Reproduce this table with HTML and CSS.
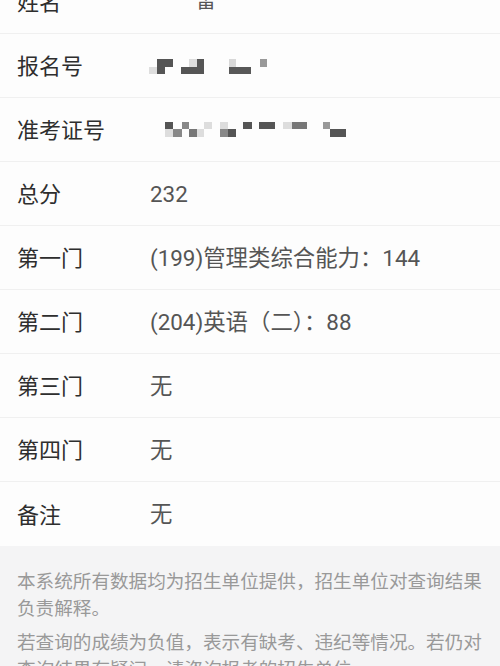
FILE: index.html
```html
<!DOCTYPE html>
<html lang="zh">
<head>
<meta charset="utf-8">
<link rel="stylesheet" href="styles.css">
</head>
<body>
<div class="page">
  <div class="list">
    <div class="row">
      <div class="label">姓名</div>
      <div class="value">
        <svg class="mosaic" width="40" height="20" viewBox="0 0 40 20"><rect x="0" y="0" width="16" height="8" fill="#e2e2e2"/><rect x="16" y="0" width="23" height="8" fill="#5a5a5a"/></svg><span class="name">雷</span>
      </div>
    </div>
    <div class="row">
      <div class="label">报名号</div>
      <div class="value">
        <svg class="mosaic" width="130" height="20" viewBox="149 58 130 20">
          <rect x="149" y="69" width="8" height="7" fill="#dedede"/>
          <rect x="157" y="61" width="16" height="8" fill="#555"/>
          <rect x="157" y="69" width="8" height="7" fill="#555"/>
          <rect x="189" y="61" width="8" height="8" fill="#dcdcdc"/>
          <rect x="197" y="61" width="7" height="15" fill="#555"/>
          <rect x="181" y="69" width="16" height="7" fill="#555"/>
          <rect x="229" y="61" width="7" height="8" fill="#d8d8d8"/>
          <rect x="229" y="69" width="22" height="7" fill="#585858"/>
          <rect x="260" y="61" width="7" height="8" fill="#999"/>
        </svg>
      </div>
    </div>
    <div class="row">
      <div class="label">准考证号</div>
      <div class="value">
        <svg class="mosaic" width="200" height="20" viewBox="149 122 200 20">
          <rect x="165" y="124" width="8" height="7" fill="#555"/>
          <rect x="182" y="124" width="7" height="7" fill="#888"/>
          <rect x="204" y="124" width="8" height="7" fill="#ddd"/>
          <rect x="220" y="124" width="8" height="7" fill="#ddd"/>
          <rect x="243" y="124" width="9" height="7" fill="#555"/>
          <rect x="259" y="124" width="16" height="7" fill="#555"/>
          <rect x="283" y="124" width="9" height="7" fill="#ddd"/>
          <rect x="292" y="124" width="15" height="7" fill="#777"/>
          <rect x="323" y="124" width="7" height="7" fill="#999"/>
          <rect x="165" y="131" width="8" height="8" fill="#ddd"/>
          <rect x="173" y="131" width="9" height="8" fill="#888"/>
          <rect x="189" y="131" width="8" height="8" fill="#777"/>
          <rect x="197" y="131" width="7" height="8" fill="#ddd"/>
          <rect x="220" y="131" width="8" height="8" fill="#888"/>
          <rect x="228" y="131" width="8" height="8" fill="#555"/>
          <rect x="330" y="131" width="16" height="8" fill="#555"/>
        </svg>
      </div>
    </div>
    <div class="row">
      <div class="label">总分</div>
      <div class="value">232</div>
    </div>
    <div class="row">
      <div class="label">第一门</div>
      <div class="value">(199)管理类综合能力：144</div>
    </div>
    <div class="row">
      <div class="label">第二门</div>
      <div class="value">(204)英语（二）：88</div>
    </div>
    <div class="row">
      <div class="label">第三门</div>
      <div class="value">无</div>
    </div>
    <div class="row">
      <div class="label">第四门</div>
      <div class="value">无</div>
    </div>
    <div class="row">
      <div class="label">备注</div>
      <div class="value">无</div>
    </div>
  </div>
  <div class="notes">
    <p>本系统所有数据均为招生单位提供，招生单位对查询结果负责解释。</p>
    <p>若查询的成绩为负值，表示有缺考、违纪等情况。若仍对查询结果有疑问，请咨询报考的招生单位。</p>
  </div>
</div>
</body>
</html>
```

FILE: styles.css
```css
html, body {
  margin: 0;
  padding: 0;
  background: #f4f4f5;
}
body {
  font-family: "Noto Sans CJK SC", "Noto Sans", sans-serif;
  overflow: hidden;
}
.page {
  margin-top: -30px;
}
.list {
  background: #fdfdfd;
}
.row {
  display: flex;
  align-items: center;
  height: 63px;
  border-bottom: 1px solid #f0f0f0;
  padding-left: 17px;
}
.row:last-child {
  border-bottom: none;
  height: 64px;
}
.label {
  width: 133px;
  font-size: 22px;
  color: #2e2e2e;
  line-height: 1;
  margin-top: -3px;
}
.value {
  display: flex;
  align-items: center;
  font-size: 22.4px;
  color: #555;
  line-height: 1;
  font-family: "Roboto", "Noto Sans CJK SC", sans-serif;
  margin-top: 1px;
}
.value .name {
  font-family: "Noto Sans CJK SC", sans-serif;
  font-size: 20px;
  margin-top: -4px;
  margin-left: -1px;
}
.mosaic {
  display: block;
}
.row:first-child .mosaic {
  margin-left: 7px;
  margin-top: -10px;
}
.row:nth-child(2) .mosaic,
.row:nth-child(3) .mosaic {
  margin-left: -1px;
}
.notes {
  background: #f4f4f5;
  padding: 20px 17px 20px 17px;
}
.notes p {
  margin: 0 0 7px 0;
  font-size: 18.6px;
  line-height: 27px;
  color: #999;
}
```
